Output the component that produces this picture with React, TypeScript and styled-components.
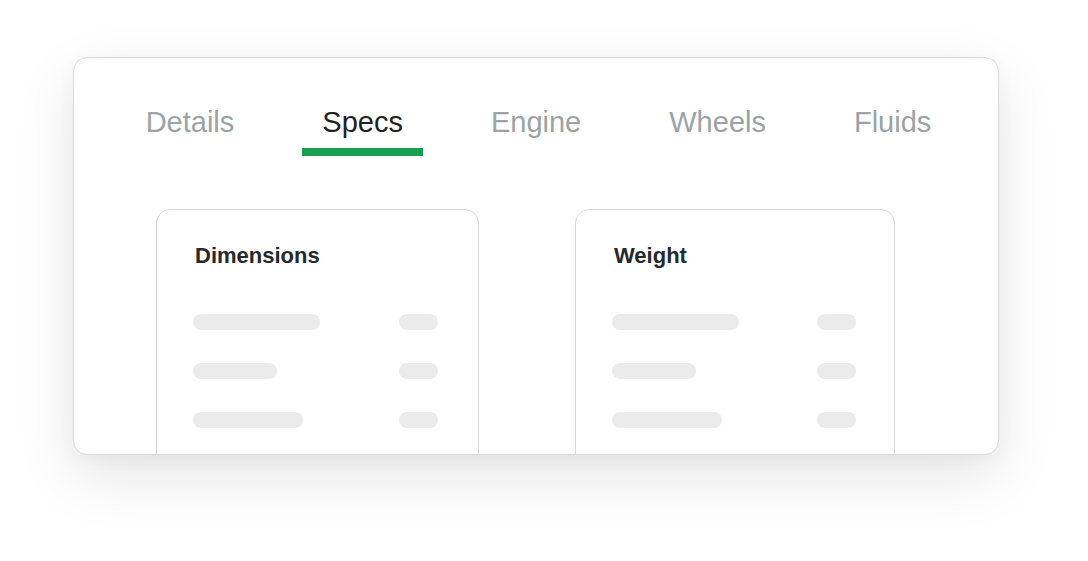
import React from "react";
import styled, { createGlobalStyle } from "styled-components";

const GlobalStyle = createGlobalStyle`
  html, body {
    margin: 0;
    padding: 0;
    background: #ffffff;
    font-family: "Liberation Sans", Arial, sans-serif;
  }
  * { box-sizing: border-box; }
`;

const Page = styled.div`
  width: 1088px;
  height: 561px;
  padding: 57px 0 0 73px;
  background: #ffffff;
  overflow: hidden;
`;

const Panel = styled.div`
  width: 926px;
  height: 398px;
  background: #ffffff;
  border: 1px solid #dadada;
  border-radius: 14px;
  box-shadow: 0 22px 60px rgba(0, 0, 0, 0.1), 0 4px 18px rgba(0, 0, 0, 0.04);
  overflow: hidden;
  display: flex;
  flex-direction: column;
`;

const TabBar = styled.nav`
  display: flex;
  justify-content: center;
  gap: 48px;
  padding: 50px 0 0 5px;
`;

const Tab = styled.button<{ $active?: boolean }>`
  appearance: none;
  background: none;
  border: none;
  margin: 0;
  padding: 0 20px 11px;
  font-family: "Liberation Sans", Arial, sans-serif;
  font-size: 29px;
  line-height: 29px;
  color: ${(p) => (p.$active ? "#1f2223" : "#9ba3a6")};
  border-bottom: 8px solid ${(p) => (p.$active ? "#14a04f" : "transparent")};
  cursor: pointer;
`;

const CardRow = styled.div`
  display: flex;
  gap: 96px;
  padding: 53px 0 0 82px;
`;

const SpecCard = styled.section<{ $width: number }>`
  width: ${(p) => p.$width}px;
  height: 300px;
  flex: none;
  border: 1px solid #d8d8d8;
  border-radius: 14px;
  padding: 33px ${(p) => (p.$width > 320 ? 40 : 38)}px 0 36px;
  display: flex;
  flex-direction: column;
`;

const CardTitle = styled.h3`
  margin: 0 0 45px;
  padding-left: 2px;
  font-size: 22px;
  line-height: 26px;
  font-weight: 700;
  color: #26292a;
`;

const Rows = styled.div`
  display: flex;
  flex-direction: column;
  gap: 33px;
`;

const Row = styled.div`
  display: flex;
  justify-content: space-between;
  align-items: center;
`;

const Bar = styled.div<{ $w: number }>`
  width: ${(p) => p.$w}px;
  height: 16px;
  border-radius: 8px;
  background: #ebebeb;
`;

const tabs = ["Details", "Specs", "Engine", "Wheels", "Fluids"];

const cards = [
  { title: "Dimensions", width: 323, rows: [127, 84, 110] },
  { title: "Weight", width: 320, rows: [127, 84, 110] },
];

export default function App() {
  return (
    <>
      <GlobalStyle />
      <Page>
        <Panel>
          <TabBar>
            {tabs.map((t) => (
              <Tab key={t} $active={t === "Specs"}>
                {t}
              </Tab>
            ))}
          </TabBar>
          <CardRow>
            {cards.map((c) => (
              <SpecCard key={c.title} $width={c.width}>
                <CardTitle>{c.title}</CardTitle>
                <Rows>
                  {c.rows.map((w, i) => (
                    <Row key={i}>
                      <Bar $w={w} />
                      <Bar $w={39} />
                    </Row>
                  ))}
                </Rows>
              </SpecCard>
            ))}
          </CardRow>
        </Panel>
      </Page>
    </>
  );
}
